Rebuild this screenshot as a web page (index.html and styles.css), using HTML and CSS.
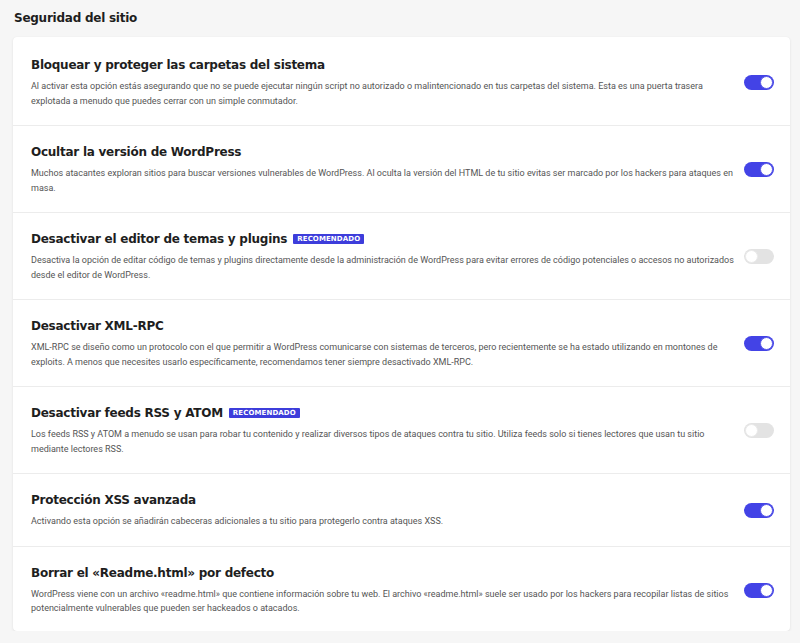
FILE: index.html
```html
<!DOCTYPE html>
<html lang="es">
<head>
<meta charset="utf-8">
<title>Seguridad del sitio</title>
<link rel="stylesheet" href="styles.css">
</head>
<body>
<main class="page">
  <h1 class="page-title">Seguridad del sitio</h1>
  <section class="card">
    <div class="row">
      <div class="text">
        <h2 class="row-title">Bloquear y proteger las carpetas del sistema</h2>
        <p class="desc">Al activar esta opción estás asegurando que no se puede ejecutar ningún script no autorizado o malintencionado en tus carpetas del sistema. Esta es una puerta trasera explotada a menudo que puedes cerrar con un simple conmutador.</p>
      </div>
      <span class="toggle on"></span>
    </div>
    <div class="row">
      <div class="text">
        <h2 class="row-title">Ocultar la versión de WordPress</h2>
        <p class="desc">Muchos atacantes exploran sitios para buscar versiones vulnerables de WordPress. Al oculta la versión del HTML de tu sitio evitas ser marcado por los hackers para ataques en masa.</p>
      </div>
      <span class="toggle on"></span>
    </div>
    <div class="row">
      <div class="text">
        <h2 class="row-title">Desactivar el editor de temas y plugins <span class="badge">RECOMENDADO</span></h2>
        <p class="desc">Desactiva la opción de editar código de temas y plugins directamente desde la administración de WordPress para evitar errores de código potenciales o accesos no autorizados desde el editor de WordPress.</p>
      </div>
      <span class="toggle"></span>
    </div>
    <div class="row">
      <div class="text">
        <h2 class="row-title">Desactivar XML-RPC</h2>
        <p class="desc">XML-RPC se diseño como un protocolo con el que permitir a WordPress comunicarse con sistemas de terceros, pero recientemente se ha estado utilizando en montones de exploits. A menos que necesites usarlo específicamente, recomendamos tener siempre desactivado XML-RPC.</p>
      </div>
      <span class="toggle on"></span>
    </div>
    <div class="row">
      <div class="text">
        <h2 class="row-title">Desactivar feeds RSS y ATOM <span class="badge">RECOMENDADO</span></h2>
        <p class="desc">Los feeds RSS y ATOM a menudo se usan para robar tu contenido y realizar diversos tipos de ataques contra tu sitio. Utiliza feeds solo si tienes lectores que usan tu sitio mediante lectores RSS.</p>
      </div>
      <span class="toggle"></span>
    </div>
    <div class="row">
      <div class="text">
        <h2 class="row-title">Protección XSS avanzada</h2>
        <p class="desc">Activando esta opción se añadirán cabeceras adicionales a tu sitio para protegerlo contra ataques XSS.</p>
      </div>
      <span class="toggle on"></span>
    </div>
    <div class="row last">
      <div class="text">
        <h2 class="row-title">Borrar el «Readme.html» por defecto</h2>
        <p class="desc">WordPress viene con un archivo «readme.html» que contiene información sobre tu web. El archivo «readme.html» suele ser usado por los hackers para recopilar listas de sitios potencialmente vulnerables que pueden ser hackeados o atacados.</p>
      </div>
      <span class="toggle on"></span>
    </div>
  </section>
</main>
</body>
</html>
```

FILE: styles.css
```css
html, body {
  margin: 0;
  padding: 0;
  background: #f6f6f6;
}
.page {
  padding: 9px 10px 0 13px;
  font-family: Roboto, "Liberation Sans", sans-serif;
}
.page-title {
  margin: 0 0 9px 1px;
  font-family: "DejaVu Sans", sans-serif;
  font-weight: 700;
  font-size: 12px;
  line-height: 19px;
  color: #1e1e1e;
  letter-spacing: -0.25px;
}
.card {
  background: #fff;
  border-radius: 4px;
  box-shadow: 0 1px 3px rgba(0,0,0,0.08), 0 0 1px rgba(0,0,0,0.06);
  width: 777px;
}
.row {
  display: flex;
  align-items: center;
  justify-content: space-between;
  padding: 18px 16px 17px 18px;
  border-top: 1px solid #ececec;
}
.row:first-child {
  border-top: none;
  padding-top: 20px;
}
.row.last {
  padding-bottom: 15px;
}
.text {
  flex: 1;
  padding-right: 8px;
}
.row-title {
  margin: 0 0 6px 0;
  font-family: "DejaVu Sans", sans-serif;
  font-weight: 700;
  font-size: 12px;
  line-height: 16px;
  color: #1e1e1e;
  letter-spacing: -0.25px;
  display: flex;
  align-items: center;
}
.badge {
  display: inline-block;
  margin-left: 6px;
  background: #3d3ddb;
  color: #fff;
  font-family: "DejaVu Sans", sans-serif;
  font-weight: 700;
  font-size: 7px;
  line-height: 10px;
  padding: 0 4px;
  border-radius: 1px;
  letter-spacing: 0.1px;
}
.desc {
  margin: 0;
  font-size: 9px;
  line-height: 14.5px;
  color: #555;
}
.toggle {
  position: relative;
  flex: none;
  width: 30px;
  height: 15px;
  border-radius: 8px;
  background: #e3e3e3;
}
.toggle::after {
  content: "";
  position: absolute;
  top: 1px;
  left: 1px;
  width: 13px;
  height: 13px;
  border-radius: 50%;
  background: #fff;
  box-sizing: border-box;
  border: 1px solid #eaeaea;
}
.toggle.on {
  background: #4343e6;
}
.toggle.on::after {
  left: 16px;
  border-color: #5a5ae8;
}
```
